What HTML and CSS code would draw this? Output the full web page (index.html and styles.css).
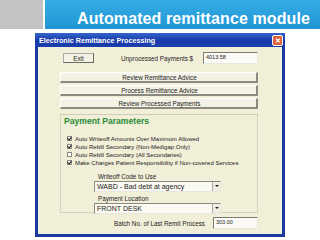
FILE: index.html
```html
<!DOCTYPE html>
<html lang="en">
<head>
    <meta charset="UTF-8">
    <meta name="viewport" content="width=device-width, initial-scale=1.0">
    <title>Automated remittance module</title>
    <link rel="stylesheet" href="styles.css">
</head>
<body>
    <div class="header">
      <div class="gray"></div>
      <div class="band"><h1>Automated remittance module</h1></div>
    </div>
    <div class="stage">
      <div class="window">
        <div class="titlebar">
          <span>Electronic Remittance Processing</span>
          <span class="close">&#x2715;</span>
        </div>
        <div class="content">
          <div class="toprow">
            <div class="btn exit">Exit</div>
            <div class="label unproc">Unprocessed Payments $</div>
            <div class="field amount">4013.58</div>
          </div>
          <div class="buttons">
            <div class="btn wide">Review Remittance Advice</div>
            <div class="btn wide">Process Remittance Advice</div>
            <div class="btn wide">Review Processed Payments</div>
          </div>
          <div class="group">
            <div class="grouphead">Payment Parameters</div>
            <div class="checks">
              <div class="check"><span class="box on"></span>Auto Writeoff Amounts Over Maximum Allowed</div>
              <div class="check"><span class="box on"></span>Auto Rebill Secondary (Non-Medigap Only)</div>
              <div class="check"><span class="box"></span>Auto Rebill Secondary (All Secondaries)</div>
              <div class="check"><span class="box on"></span>Make Charges Patient Responsibility if Non-covered Services</div>
            </div>
            <div class="pick">
              <div class="label">Writeoff Code to Use</div>
              <div class="select"><span>WABD - Bad debt at agency</span><span class="arrow"></span></div>
              <div class="label">Payment Location</div>
              <div class="select"><span>FRONT DESK</span><span class="arrow"></span></div>
            </div>
          </div>
          <div class="batch">
            <div class="label">Batch No. of Last Remit Process</div>
            <div class="field batchno">303.00</div>
          </div>
        </div>
      </div>
    </div>
</body>
</html>
```

FILE: styles.css
```css
body{
  margin: 0;
  width: 320px;
  height: 240px;
  overflow: hidden;
  background: #fff;
  font-family: "Liberation Sans", Arial, sans-serif;
}

.header{
  display: flex;
  height: 29px;
}

.gray{
  width: 43px;
  background: #c3c3c3;
}

.band{
  flex: 1;
  margin-left: 2px;
  background: linear-gradient(#36ace6, #1f95d3);
}

h1{
  margin: 0;
  padding: 10px 0 0 32px;
  color: #fff;
  font-size: 16px;
  font-weight: bold;
  line-height: 17px;
  letter-spacing: 0.1px;
}

.stage{
  padding: 4px 0 0 35px;
}

.window{
  width: 244px;
  height: 201px;
  border: 3px solid #1a38a0;
  border-top: 0;
  background: #f2efd9;
}

.titlebar{
  height: 14px;
  display: flex;
  align-items: center;
  justify-content: space-between;
  padding: 0 2px 0 4px;
  margin: 0 -3px;
  background: linear-gradient(#3466cc, #1638a8 55%, #1c3fae);
  color: #fff;
  font-size: 7.2px;
  font-weight: bold;
}

.close{
  width: 11px;
  height: 11px;
  border: 1px solid #fff;
  border-radius: 2px;
  box-sizing: border-box;
  background: #e0603a;
  color: #fff;
  font-size: 7px;
  line-height: 9px;
  text-align: center;
}

.content{
  padding: 5px 24px 0 22px;
  font-size: 6.3px;
  color: #222;
}

.toprow{
  display: flex;
  align-items: center;
  height: 12px;
}

.btn{
  height: 10px;
  line-height: 10px;
  text-align: center;
  background: #f4f2e4;
  border: 1px solid #fff;
  border-right-color: #8a8a80;
  border-bottom-color: #8a8a80;
  box-sizing: border-box;
}

.exit{
  width: 31px;
  margin-left: 3px;
  border: 1px solid #6a6a60;
  border-top-color: #aaa;
  border-left-color: #aaa;
}

.unproc{
  margin-left: 27px;
  flex: 1;
}

.field{
  background: #fbfaf4;
  border: 1px solid #7a7a70;
  border-right-color: #e8e8e0;
  border-bottom-color: #e8e8e0;
  box-sizing: border-box;
  height: 12px;
  line-height: 8px;
  padding-left: 2px;
  font-size: 5.5px;
}

.amount{
  width: 55px;
}

.buttons{
  display: flex;
  flex-direction: column;
  gap: 2px;
  margin-top: 8px;
}

.wide{
  height: 11px;
  line-height: 9px;
  padding-left: 2px;
  border-right-width: 2px;
  border-bottom-width: 2px;
}

.group{
  margin-top: 5px;
  height: 99px;
  border: 1px solid #d4d2c0;
  border-top-color: #cfcdb8;
  box-sizing: border-box;
}

.grouphead{
  padding: 1px 0 0 3px;
  height: 9px;
  color: #2f8a3a;
  font-size: 8.6px;
  font-weight: bold;
  text-shadow: 0 0 2px #d8f0c8;
}

.checks{
  margin-top: 10px;
  display: flex;
  flex-direction: column;
  gap: 1px;
}

.check{
  display: flex;
  align-items: center;
  height: 7px;
  padding-left: 6px;
  font-size: 6px;
}

.box{
  width: 5px;
  height: 5px;
  margin-right: 3px;
  border: 1px solid #8a8a80;
  box-sizing: border-box;
  background: #fff;
  position: relative;
}

.box.on::after{
  content: "";
  position: absolute;
  left: 0;
  top: -1px;
  width: 2px;
  height: 3px;
  border: solid #222;
  border-width: 0 1px 1px 0;
  transform: rotate(40deg);
}

.pick{
  margin: 6px 0 0 33px;
  width: 127px;
}

.pick .label{
  padding-left: 4px;
  height: 9px;
  line-height: 9px;
}

.select{
  display: flex;
  align-items: center;
  justify-content: space-between;
  height: 11px;
  margin-bottom: 2px;
  padding-left: 2px;
  background: #fbfaf2;
  border: 1px solid #8a8a80;
  border-right-color: #e8e8e0;
  border-bottom-color: #e8e8e0;
  box-sizing: border-box;
  font-size: 7px;
}

.arrow{
  width: 7px;
  height: 9px;
  background: #f0eee0;
  border-left: 1px solid #aaa;
  position: relative;
}

.arrow::after{
  content: "";
  position: absolute;
  left: 2px;
  top: 3px;
  border: 2px solid transparent;
  border-top-color: #222;
  border-bottom: 0;
}

.batch{
  display: flex;
  align-items: center;
  justify-content: flex-end;
  margin-top: 4px;
  gap: 8px;
}

.batchno{
  width: 45px;
  height: 12px;
}
```
